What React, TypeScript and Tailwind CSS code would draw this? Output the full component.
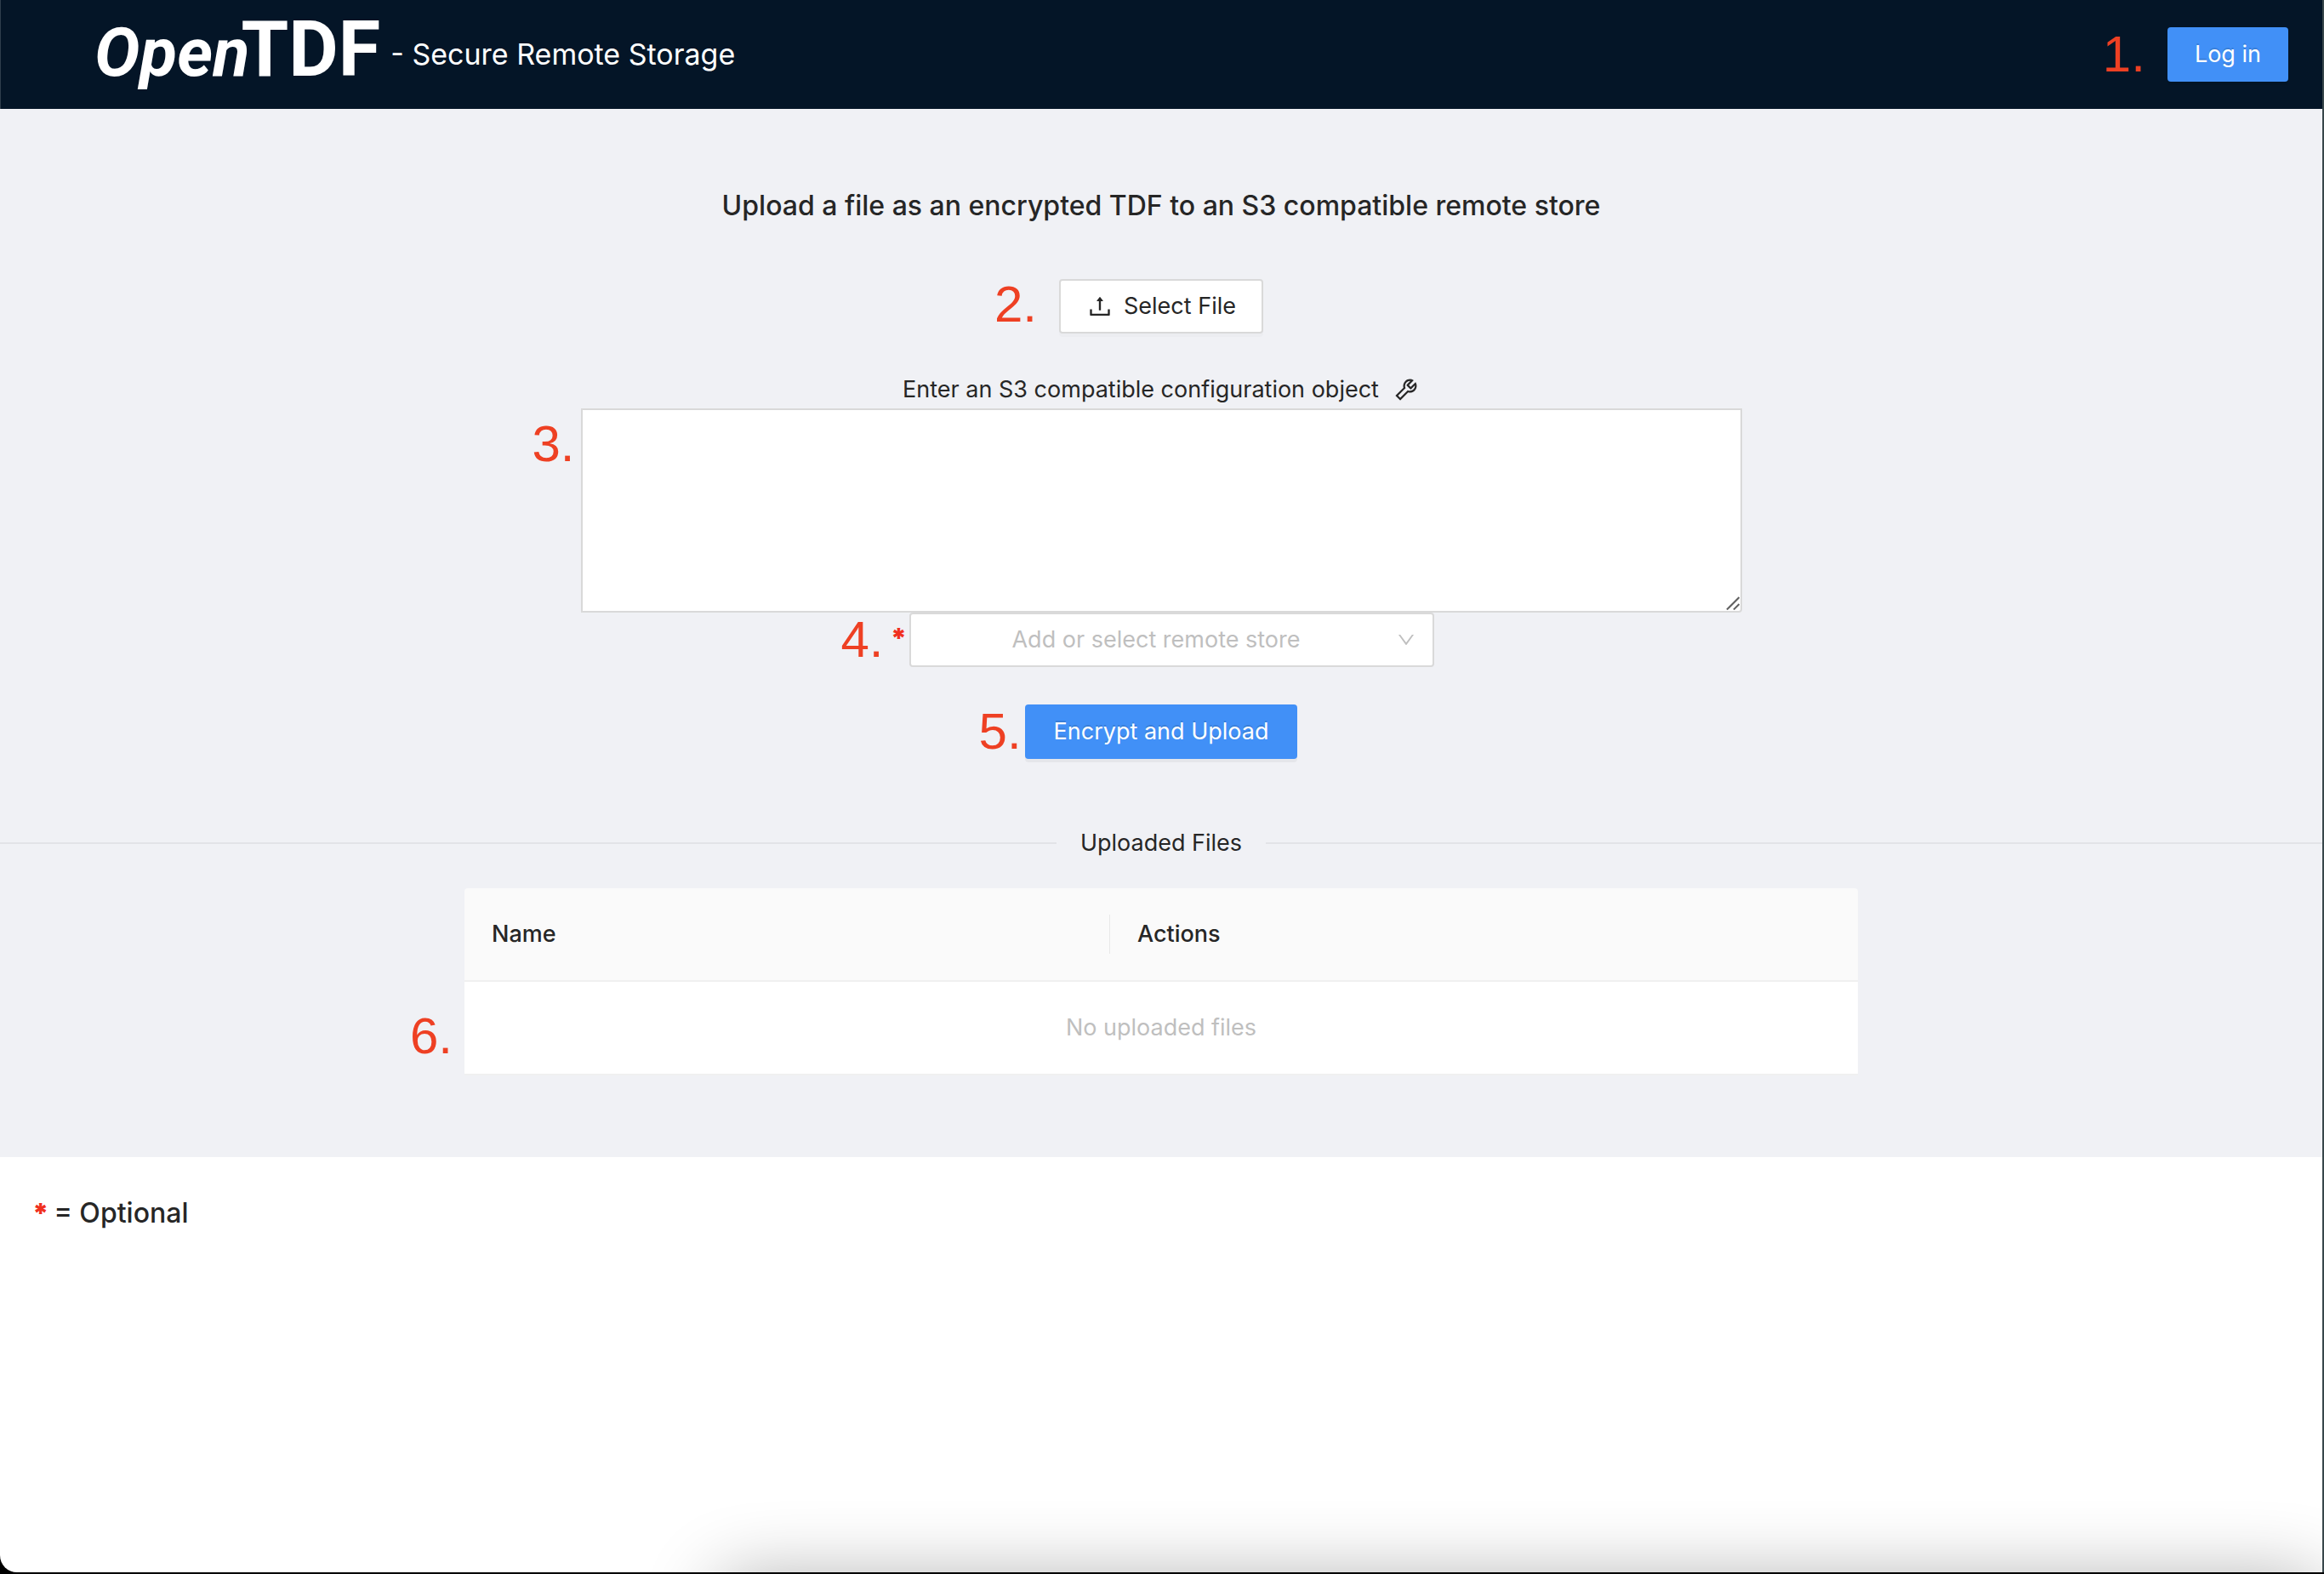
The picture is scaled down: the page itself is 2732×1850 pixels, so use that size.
import type { ReactNode } from 'react';
import { AiOutlineDown, AiOutlineTool, AiOutlineUpload } from 'react-icons/ai';

function Step({ n, className }: { n: number; className: string }) {
  return (
    <span
      className={`pointer-events-none absolute right-full font-['Liberation_Sans',sans-serif] text-[60px] leading-[60px] font-normal text-[#ee4023] ${className}`}
    >
      {n}.
    </span>
  );
}

function PrimaryButton({ className, children }: { className: string; children: ReactNode }) {
  return (
    <button
      type="button"
      className={`h-16 rounded-sm bg-[#4190f7] whitespace-nowrap text-white shadow-[0_4px_0_rgba(0,0,0,0.045)] [text-shadow:0_-2px_0_rgba(0,0,0,0.12)] ${className}`}
    >
      {children}
    </button>
  );
}

function Header() {
  return (
    <header className="flex h-32 items-center border-l border-[#2f3d4c] bg-[#041527] pr-10 pl-[110px] text-white">
      <a
        href="#"
        aria-label="OpenTDF"
        className="pb-2 font-['Roboto',sans-serif] text-[90px] leading-[106px] font-bold whitespace-nowrap"
      >
        <span className="text-[80px] italic">Open</span>
        <span className="-ml-2.5">TDF</span>
      </a>
      <h1 className="ml-3 text-[34px] leading-[44px]">- Secure Remote Storage</h1>
      <div className="relative ml-auto">
        <Step n={1} className="top-0.5 mr-[26px]" />
        <PrimaryButton className="px-8">Log in</PrimaryButton>
      </div>
    </header>
  );
}

function UploadForm() {
  return (
    <form className="flex flex-col items-center" onSubmit={(e) => e.preventDefault()}>
      <h2 className="text-[32px] leading-[44px] font-medium">
        Upload a file as an encrypted TDF to an S3 compatible remote store
      </h2>

      <div className="relative mt-16">
        <Step n={2} className="top-0 mr-[26px]" />
        <button
          type="button"
          className="flex h-16 items-center gap-3 rounded-sm border-2 border-[#d9d9d9] bg-white px-[30px] shadow-[0_4px_0_rgba(0,0,0,0.016)]"
        >
          <AiOutlineUpload className="size-8" />
          Select File
        </button>
      </div>

      <label htmlFor="config" className="mt-11 flex h-11 items-center gap-4">
        Enter an S3 compatible configuration object
        <AiOutlineTool className="size-8" />
      </label>
      <div className="relative flex w-1/2">
        <Step n={3} className="top-3 mr-[7px]" />
        <textarea
          id="config"
          className="h-60 w-full resize-none rounded-br-sm border-2 border-[#d9d9d9] bg-white px-5 py-2 outline-none"
        />
        <svg
          viewBox="0 0 16 16"
          className="pointer-events-none absolute right-[3px] bottom-[3px] size-4"
          fill="none"
          stroke="#5f5f5f"
          strokeWidth="2"
          aria-hidden="true"
        >
          <path d="M1 15.500 15.500 1M9 15.500 15.500 9" />
        </svg>
      </div>

      <div className="relative flex">
        <Step n={4} className="top-0.5 mr-[6px]" />
        <label
          htmlFor="store"
          aria-label="Remote store (optional)"
          className="w-6 pt-2 text-center text-[32px] leading-[44px] font-black text-[#f0301f]"
        >
          *
        </label>
        <div className="relative">
          <select
            id="store"
            defaultValue=""
            className="h-16 w-[617px] appearance-none rounded-sm border-2 border-[#d9d9d9] bg-white pr-14 pl-5 text-[#bfbfbf] outline-none [text-align-last:center]"
          >
            <option value="">Add or select remote store</option>
          </select>
          <AiOutlineDown className="pointer-events-none absolute top-5 right-[21px] size-6 text-[#bfbfbf]" />
        </div>
      </div>

      <div className="relative mt-11">
        <Step n={5} className="top-0.5 mr-1" />
        <PrimaryButton className="px-[34px]">Encrypt and Upload</PrimaryButton>
      </div>
    </form>
  );
}

function UploadedFiles() {
  return (
    <section className="mt-[76px]">
      <div className="flex h-[46px] items-center gap-7">
        <span className="h-0.5 flex-1 bg-[#e2e3e7]" />
        <h3>Uploaded Files</h3>
        <span className="h-0.5 flex-1 bg-[#e2e3e7]" />
      </div>
      <div className="relative mx-auto mt-[30px] w-3/5">
        <table className="w-full table-fixed border-separate border-spacing-0 text-left">
          <thead>
            <tr className="h-[110px] bg-[#fafafa]">
              <th className="w-[759px] rounded-tl-sm border-b-2 border-[#f0f0f0] p-0 font-medium">
                <span className="flex h-[46px] items-center border-r border-[#e8e8e8] pl-8">Name</span>
              </th>
              <th className="rounded-tr-sm border-b-2 border-[#f0f0f0] px-8 py-0 font-medium">Actions</th>
            </tr>
          </thead>
          <tbody>
            <tr className="h-[110px] bg-white">
              <td colSpan={2} className="border-b-2 border-[#f0f0f0] p-0 text-center text-[#bfbfbf]">
                No uploaded files
              </td>
            </tr>
          </tbody>
        </table>
        <Step n={6} className="bottom-4 mr-[14px]" />
      </div>
    </section>
  );
}

export default function App() {
  return (
    <div className="flex min-h-screen bg-black pb-0.5 font-['Inter',sans-serif] text-[27px] leading-[44px] text-[#262626]">
      <div className="relative flex flex-1 flex-col overflow-hidden rounded-bl-[20px] bg-white">
        <Header />
        <main className="bg-[#f0f1f5] pt-[92px] pb-24">
          <UploadForm />
          <UploadedFiles />
        </main>
        <p className="flex gap-1.5 px-[38px] pt-11 text-[32px] leading-[44px] font-medium">
          <span className="font-black text-[#f0301f]">*</span>
          <span>= Optional</span>
        </p>
        <div className="pointer-events-none absolute top-full right-0 left-[31%] mt-2 h-40 rounded-[20px] shadow-[0_0_88px_rgba(0,0,0,0.32)]" />
      </div>
      <div className="w-0.5 bg-[#38474b]" />
    </div>
  );
}
